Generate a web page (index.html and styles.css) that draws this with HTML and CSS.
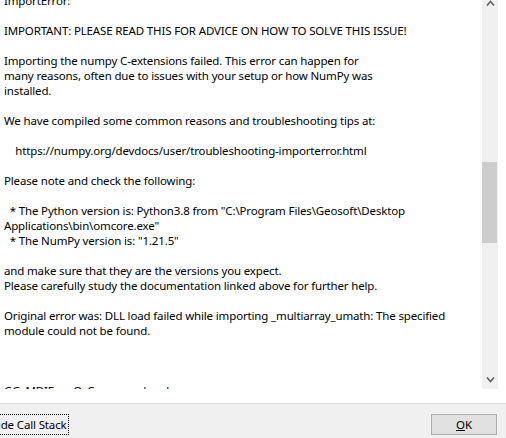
FILE: index.html
```html
<!DOCTYPE html>
<html>
<head>
<meta charset="utf-8">
<link rel="stylesheet" href="styles.css">
</head>
<body>
<div class="pane">
  <div class="edit">
<div class="text">ImportError:

IMPORTANT: PLEASE READ THIS FOR ADVICE ON HOW TO SOLVE THIS ISSUE!

Importing the numpy C-extensions failed. This error can happen for
many reasons, often due to issues with your setup or how NumPy was
installed.

We have compiled some common reasons and troubleshooting tips at:

    https://numpy.org/devdocs/user/troubleshooting-importerror.html

Please note and check the following:

  * The Python version is: Python3.8 from "C:\Program Files\Geosoft\Desktop
Applications\bin\omcore.exe"
  * The NumPy version is: "1.21.5"

and make sure that they are the versions you expect.
Please carefully study the documentation linked above for further help.

Original error was: DLL load failed while importing _multiarray_umath: The specified
module could not be found.



GG_MDIF       Q_Compound       l
</div>
  </div>
  <div class="scrollbar">
    <div class="arrow arrow-up">
      <svg width="9" height="6" viewBox="0 0 9 6"><polyline points="1,5.5 4.5,1.5 8,5.5" fill="none" stroke="#606060" stroke-width="1.6"/></svg>
    </div>
    <div class="track-top"></div>
    <div class="thumb"></div>
    <div class="track-bottom"></div>
    <div class="arrow arrow-down">
      <svg width="9" height="6" viewBox="0 0 9 6"><polyline points="1,0.5 4.5,4.5 8,0.5" fill="none" stroke="#606060" stroke-width="1.6"/></svg>
    </div>
  </div>
  <div class="gutter"></div>
</div>
<div class="footer">
  <div class="btn-stack"><span class="btn-stack-label">Hide Call Stack</span></div>
  <div class="btn-ok"><span class="accel">O</span>K</div>
</div>
</body>
</html>
```

FILE: styles.css
```css
html, body {
  margin: 0;
  padding: 0;
}
body {
  width: 506px;
  height: 438px;
  overflow: hidden;
  background: #f0f0f0;
  font-family: "Noto Sans", "Open Sans", sans-serif;
  font-size: 11.5px;
  letter-spacing: -0.15px;
  color: #000;
}
.pane {
  height: 403px;
  background: #fff;
  border-bottom: 1px solid #dfdfdf;
  display: flex;
  align-items: flex-start;
}
.edit {
  width: 482px;
  height: 389px;
  overflow: hidden;
}
.text {
  white-space: pre;
  line-height: 15px;
  margin-top: -7px;
  padding-left: 4px;
}
.scrollbar {
  width: 16px;
  height: 389px;
  background: #f0f0f0;
  display: flex;
  flex-direction: column;
}
.arrow {
  display: flex;
  justify-content: center;
}
.arrow-up {
  height: 8px;
  align-items: flex-start;
}
.arrow-up svg {
  margin-top: -0.5px;
}
.track-top {
  height: 154px;
}
.thumb {
  height: 81px;
  width: 15px;
  background: #cdcdcd;
}
.track-bottom {
  flex: 1;
}
.arrow-down {
  height: 12px;
  align-items: flex-start;
}
.gutter {
  flex: 1;
}
.footer {
  display: flex;
  justify-content: space-between;
  align-items: flex-start;
  padding-top: 10px;
}
.btn-stack {
  width: 69px;
  height: 21px;
  overflow: hidden;
  display: flex;
  justify-content: flex-end;
  align-items: center;
  border: 1px dotted #000;
  border-left: none;
  box-sizing: border-box;
}
.btn-stack-label {
  white-space: nowrap;
  padding-right: 1.5px;
  line-height: 15px;
}
.btn-ok {
  width: 66px;
  height: 21px;
  box-sizing: border-box;
  border: 1px solid #adadad;
  background: #e1e1e1;
  margin-right: 9px;
  display: flex;
  justify-content: center;
  align-items: center;
  line-height: 15px;
}
.accel {
  text-decoration: underline;
}
```
